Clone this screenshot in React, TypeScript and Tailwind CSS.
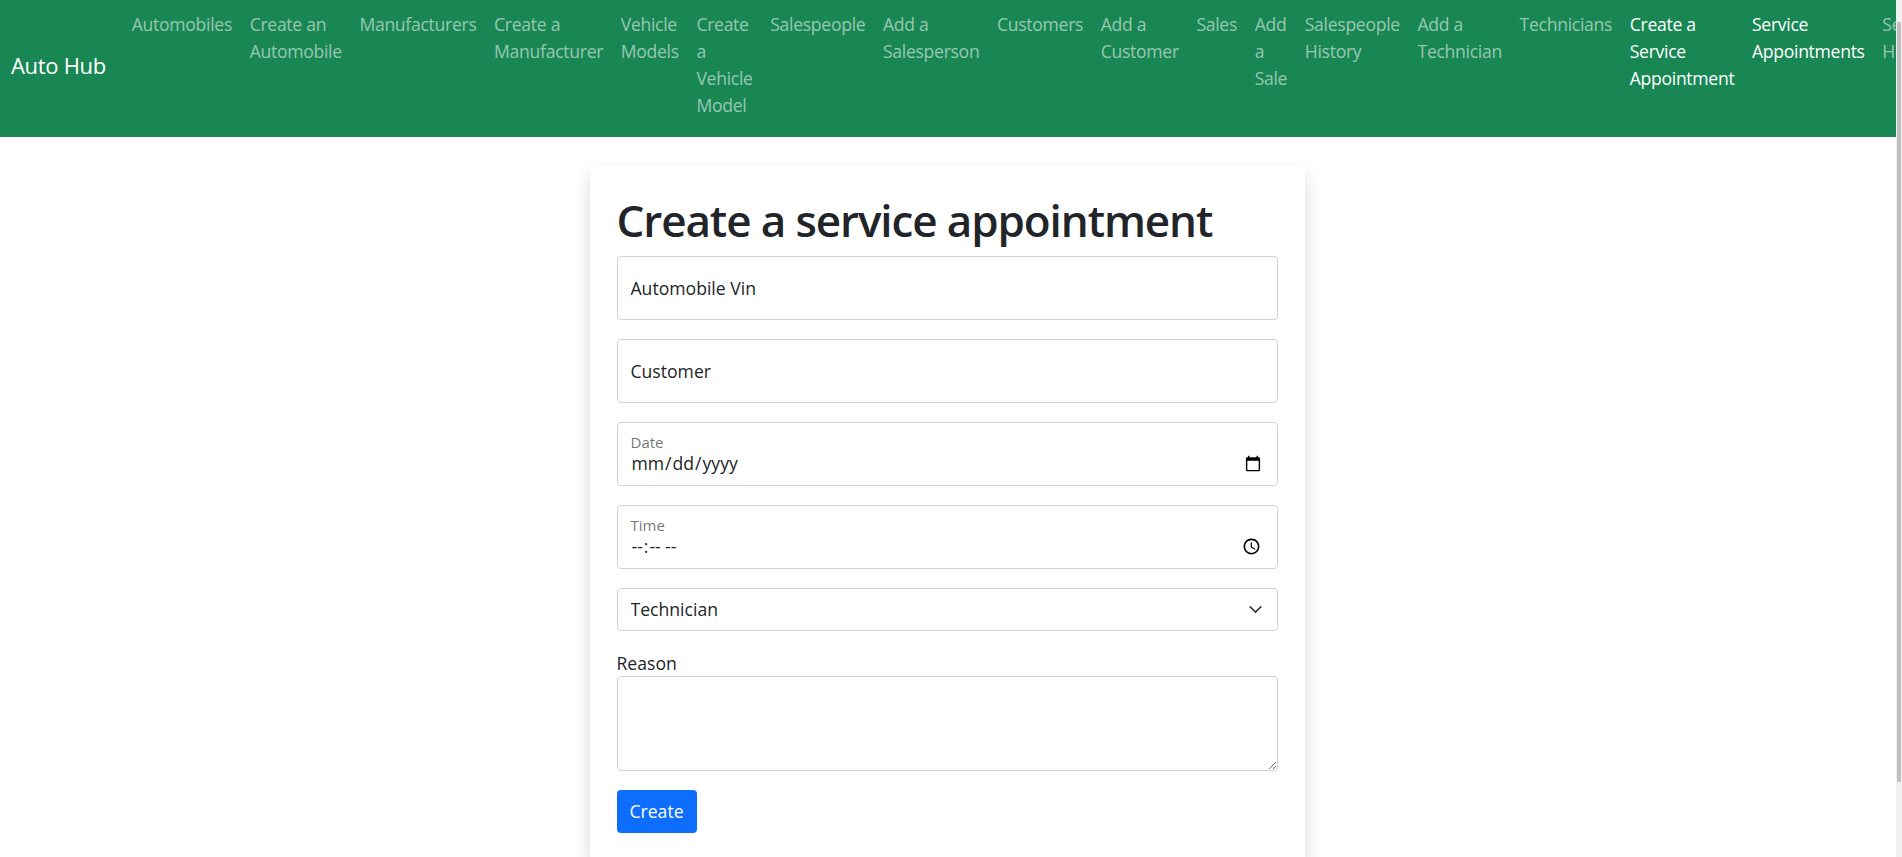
import React from 'react';

const links = [
  { name: 'Automobiles' },
  { name: 'Create an Automobile' },
  { name: 'Manufacturers' },
  { name: 'Create a Manufacturer' },
  { name: 'Vehicle Models' },
  { name: 'Create a Vehicle Model' },
  { name: 'Salespeople' },
  { name: 'Add a Salesperson' },
  { name: 'Customers' },
  { name: 'Add a Customer' },
  { name: 'Sales' },
  { name: 'Add a Sale' },
  { name: 'Salespeople History' },
  { name: 'Add a Technician' },
  { name: 'Technicians' },
  { name: 'Create a Service Appointment', active: true },
  { name: 'Service Appointments', active: true },
  { name: 'Service History' },
];

function FloatingInput({ label }: { label: string }) {
  return (
    <input
      type="text"
      placeholder={label}
      className="mb-[19px] block h-[64px] w-full rounded-[4px] border border-[#ced4da] bg-white px-[13px] text-[17.6px] text-[#212529] outline-none placeholder:text-[#212529]"
    />
  );
}

function FloatingPicker({ label, type }: { label: string; type: string }) {
  return (
    <div className="relative mb-[19px]">
      <input
        type={type}
        className="block h-[64px] w-full rounded-[4px] border border-[#ced4da] bg-white px-[13px] pt-[27px] pb-[8px] text-[17.6px] leading-[26.4px] text-[#212529] outline-none"
      />
      {/* floated label */}
      <label className="pointer-events-none absolute top-[11px] left-[14px] text-[15px] leading-[18px] text-[#212529a6]">
        {label}
      </label>
    </div>
  );
}

function App() {
  return (
    <div className="flex h-[857px] w-full overflow-hidden bg-white font-['Open_Sans','Noto_Sans',sans-serif] text-[#212529]">
      <div className="min-w-0 flex-1 overflow-hidden">
        {/* Navbar */}
        <nav className="flex h-[137px] items-start overflow-hidden bg-[#198754] pl-[11px]">
          <a href="#" className="mr-[17px] shrink-0 self-center pb-[6px] text-[22px] leading-[33px] tracking-[-0.3px] text-white">
            Auto Hub
          </a>
          <ul className="flex pt-[11px]">
            {links.map((link) => (
              <li key={link.name} className="w-min shrink-0 px-[8.8px]">
                <a
                  href="#"
                  className={`block text-[17.6px] leading-[27px] tracking-[-0.3px] ${
                    link.active ? 'text-white' : 'text-[#ffffff8c]'
                  }`}
                >
                  {link.name}
                </a>
              </li>
            ))}
          </ul>
        </nav>

        {/* Form card */}
        <div className="mx-auto mt-[28px] w-[715px] -translate-x-[1px] bg-white px-[27px] pt-[29px] pb-[27px] shadow-[0_8.8px_17.6px_rgba(0,0,0,0.15)]">
          <h1 className="mb-[9px] text-[44px] leading-[52.8px] font-semibold tracking-[-1.1px]">Create a service appointment</h1>
          <form onSubmit={(e) => e.preventDefault()}>
            <FloatingInput label="Automobile Vin" />
            <FloatingInput label="Customer" />
            <FloatingPicker label="Date" type="date" />
            <FloatingPicker label="Time" type="time" />
            <div className="relative mb-[19px]">
              <select className="block h-[43px] w-full appearance-none rounded-[4px] border border-[#ced4da] bg-white px-[13px] text-[17.6px] text-[#212529] outline-none">
                <option>Technician</option>
              </select>
              <svg
                className="pointer-events-none absolute top-[18px] right-[16px] h-[7px] w-[13px]"
                viewBox="1 4 14 8"
                fill="none"
                stroke="#343a40"
                strokeWidth="1.8"
                strokeLinecap="round"
                strokeLinejoin="round"
              >
                <path d="m2 5 6 6 6-6" />
              </svg>
            </div>
            <label className="block text-[17.6px] leading-[26px]">Reason</label>
            <textarea className="mb-[19px] block h-[95px] w-full rounded-[4px] border border-[#ced4da] bg-white px-[13px] py-[7px] text-[17.6px] outline-none" />
            <button className="h-[43px] w-[80px] rounded-[4px] bg-[#0d6efd] text-[17.6px] text-white">Create</button>
          </form>
        </div>
      </div>

      {/* Scrollbar */}
      <div className="flex w-[6px] shrink-0 flex-col items-center bg-[#f1f1f1] pt-[22px]">
        <div className="h-[760px] w-[4px] bg-[#c1c1c1]" />
      </div>
    </div>
  );
}

export default App;
